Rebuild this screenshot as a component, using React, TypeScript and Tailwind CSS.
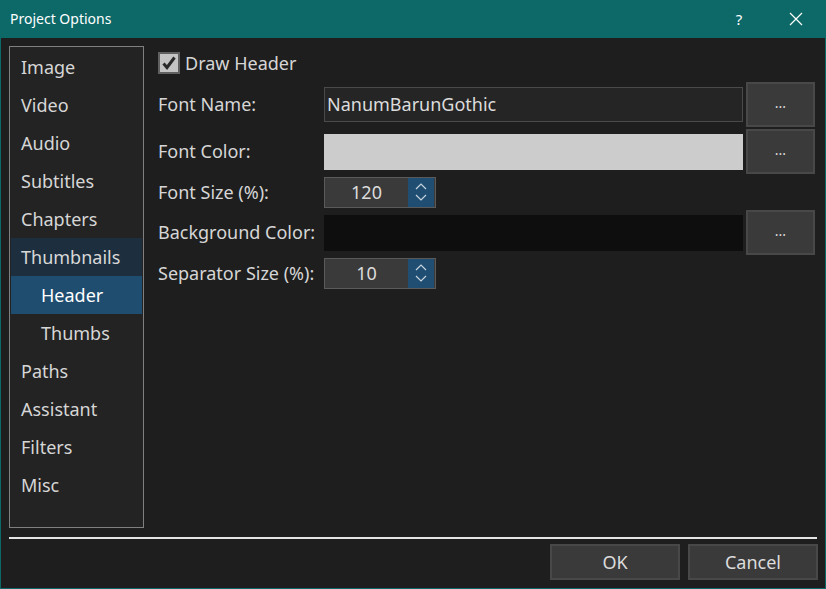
import React from "react";

const font = { fontFamily: '"Noto Sans", "Open Sans", sans-serif' };

function Spin({ value }: { value: string }) {
  return (
    <div className="w-[112px] h-[31px] border border-[#5a5a5a] bg-[#3a3a3a] flex">
      <div className="flex-1 flex items-center justify-center text-[18px] text-[#dcdcdc]">{value}</div>
      <div className="w-[26px] h-full bg-[#1f4e72] flex flex-col items-center justify-center gap-[4px] mr-[1px]">
        <svg width="12" height="7" viewBox="0 0 12 7"><path d="M1 6 L6 1 L11 6" fill="none" stroke="#c8d4de" strokeWidth="1.2" /></svg>
        <svg width="12" height="7" viewBox="0 0 12 7"><path d="M1 1 L6 6 L11 1" fill="none" stroke="#c8d4de" strokeWidth="1.2" /></svg>
      </div>
    </div>
  );
}

function DotsButton() {
  return (
    <div className="w-[69px] h-[45px] border-2 border-[#484848] bg-[#3a3a3a] flex items-center justify-center text-[#dcdcdc] text-[14px] leading-none pb-[4px]">
      ...
    </div>
  );
}

export default function App() {
  const items: { label: string; sub?: boolean; state?: "parent" | "sel" }[] = [
    { label: "Image" },
    { label: "Video" },
    { label: "Audio" },
    { label: "Subtitles" },
    { label: "Chapters" },
    { label: "Thumbnails", state: "parent" },
    { label: "Header", sub: true, state: "sel" },
    { label: "Thumbs", sub: true },
    { label: "Paths" },
    { label: "Assistant" },
    { label: "Filters" },
    { label: "Misc" },
  ];
  return (
    <div style={font} className="w-[826px] h-[589px] bg-[#0d6868] flex flex-col overflow-hidden">
      <div className="h-[38px] flex items-center text-white text-[14px] pl-[10px]">
        <span className="flex-1 pb-[1px]">Project Options</span>
        <span className="w-[20px] text-center mr-[40px] text-[15px]">?</span>
        <svg className="mr-[23px]" width="14" height="14" viewBox="0 0 14 14"><path d="M1 1 L13 13 M13 1 L1 13" stroke="#fff" strokeWidth="1.2" /></svg>
      </div>
      <div className="flex-1 mx-[1px] mb-[1px] bg-[#1e1e1e] flex flex-col">
        <div className="flex pt-[8px] pl-[8px]">
          <div className="w-[135px] h-[482px] border border-[#7f7f7f] bg-[#232323] pt-[1px] px-[1px]">
            {items.map((it) => (
              <div
                key={it.label}
                className={
                  "h-[38px] flex items-center text-[18px] " +
                  (it.sub ? "pl-[30px] " : "pl-[10px] ") +
                  (it.state === "parent" ? "bg-[#1d2f3e] text-[#d8d8d8]" : it.state === "sel" ? "bg-[#1f4d70] text-white" : "text-[#d6d6d6]")
                }
              >
                {it.label}
              </div>
            ))}
          </div>
          <div className="ml-[14px] pt-[6px] flex flex-col text-[#d6d6d6] text-[18px]">
            <div className="flex items-center h-[22px]">
              <div className="w-[22px] h-[22px] border-2 border-[#606060] bg-[#c4c4c4] flex items-center justify-center">
                <svg width="14" height="14" viewBox="0 0 14 14"><path d="M1.5 7.5 L5 11.5 L12.5 1.5" fill="none" stroke="#2a2a2a" strokeWidth="3" /></svg>
              </div>
              <span className="ml-[5px] text-[18px] pt-[1px]">Draw Header</span>
            </div>
            <div className="mt-[8px] flex flex-col gap-[2px]">
              <div className="flex items-center h-[45px]">
                <span className="w-[166px]">Font Name:</span>
                <div className="w-[419px] h-[35px] border border-[#4a4a4a] bg-[#252525] flex items-center pl-[2px] text-[18px] text-[#dcdcdc]">NanumBarunGothic</div>
                <div className="ml-[3px]"><DotsButton /></div>
              </div>
              <div className="flex items-center h-[45px]">
                <span className="w-[166px]">Font Color:</span>
                <div className="w-[419px] h-[36px] bg-[#cccccc]" />
                <div className="ml-[3px]"><DotsButton /></div>
              </div>
              <div className="flex items-center h-[32px]">
                <span className="w-[166px]">Font Size (%):</span>
                <Spin value="120" />
              </div>
              <div className="flex items-center h-[45px]">
                <span className="w-[166px]">Background Color:</span>
                <div className="w-[419px] h-[36px] bg-[#0e0e0e]" />
                <div className="ml-[3px]"><DotsButton /></div>
              </div>
              <div className="flex items-center h-[32px]">
                <span className="w-[166px]">Separator Size (%):</span>
                <Spin value="10" />
              </div>
            </div>
          </div>
        </div>
        <div className="mt-[9px] ml-[8px] w-[808px] h-[2px] bg-[#e4e4e4]" />
        <div className="mt-[5px] flex justify-end gap-[8px] pr-[7px]">
          <div className="w-[130px] h-[36px] border-2 border-[#484848] bg-[#3a3a3a] flex items-center justify-center text-[18px] text-[#dcdcdc]">OK</div>
          <div className="w-[130px] h-[36px] border-2 border-[#484848] bg-[#3a3a3a] flex items-center justify-center text-[18px] text-[#dcdcdc]">Cancel</div>
        </div>
      </div>
    </div>
  );
}
